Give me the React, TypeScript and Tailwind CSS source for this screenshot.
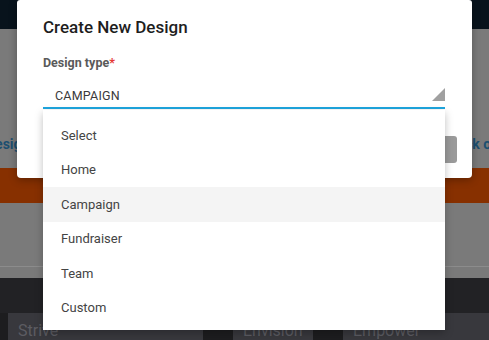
import { useState } from 'react';

const options = ['Select', 'Home', 'Campaign', 'Fundraiser', 'Team', 'Custom'];

export default function App() {
  const [value] = useState('Campaign');

  return (
    <div className="relative w-[489px] h-[340px] overflow-hidden font-['Roboto',sans-serif] bg-[#7a7a7a]">
      {/* dimmed page behind the modal */}
      <div className="flex flex-col h-full">
        <div className="h-[29px] bg-[#08131c]" />
        <div className="h-[139px] bg-[#7a7a7a] flex flex-col">
          <div className="h-[108px]" />
          <div className="flex justify-between items-center text-[14px] font-bold text-[#1d4f70] leading-none">
            <span className="-ml-[14px]">Design</span>
            <span className="-mr-[10px]">Click on</span>
          </div>
        </div>
        <div className="h-[35px] bg-[#873000]" />
        <div className="h-[64px] bg-[#7a7a7a] border-b border-[#8c8c8c]" />
        <div className="h-[11px] bg-[#7a7a7a]" />
        <div className="h-[35px] bg-[#222225]" />
        <div className="flex h-[27px] bg-[#1d1d1f] text-[16px] text-[#5c5c62] pl-[8px]">
          <div className="w-[195px] bg-[#38383d] pl-[10px] pt-[6px]">Strive</div>
          <div className="w-[30px]" />
          <div className="w-[80px] bg-[#38383d] pl-[10px] pt-[6px]">Envision</div>
          <div className="w-[30px]" />
          <div className="flex-1 bg-[#38383d] pl-[10px] pt-[6px]">Empower</div>
        </div>
      </div>

      {/* modal */}
      <div className="absolute left-[17px] top-0 w-[455px] h-[178px] bg-white rounded-b-[4px] rounded-t-[3px] shadow-[0_2px_8px_rgba(0,0,0,0.3)] px-[26px]">
        <h2 className="pt-[16px] text-[17px] font-medium text-[#1e1e1e] leading-[22px]">Create New Design</h2>
        <div className="mt-[17px] text-[12.5px] font-bold text-[#5a5a5a] leading-[16px]">
          Design type<span className="text-[#e53935]">*</span>
        </div>
        <div className="relative mt-[14px] h-[24px] border-b-2 border-[#1ea6df] w-[402px]">
          <span className="absolute left-[12px] top-[2px] text-[12.5px] text-[#3a3a3a] tracking-[0.2px]">
            {value.toUpperCase()}
          </span>
          <svg className="absolute right-0 top-[3px]" width="13" height="13" viewBox="0 0 13 13">
            <polygon points="13,0 13,13 0,13" fill="#a0a0a0" />
          </svg>
        </div>
        <div className="absolute right-[15px] top-[136px] w-[20px] h-[27px] rounded-[3px] bg-[#9a9a9a]" />
      </div>

      {/* dropdown list */}
      <ul className="absolute left-[43px] top-[110px] w-[402px] bg-white shadow-[0_3px_8px_rgba(0,0,0,0.25)] pt-[8px] pb-[5px]">
        {options.map((o) => (
          <li
            key={o}
            className={`h-[34.5px] flex items-center pl-[18px] text-[13px] text-[#444] ${o === value ? 'bg-[#f4f4f4]' : ''}`}
          >
            {o}
          </li>
        ))}
      </ul>
    </div>
  );
}
